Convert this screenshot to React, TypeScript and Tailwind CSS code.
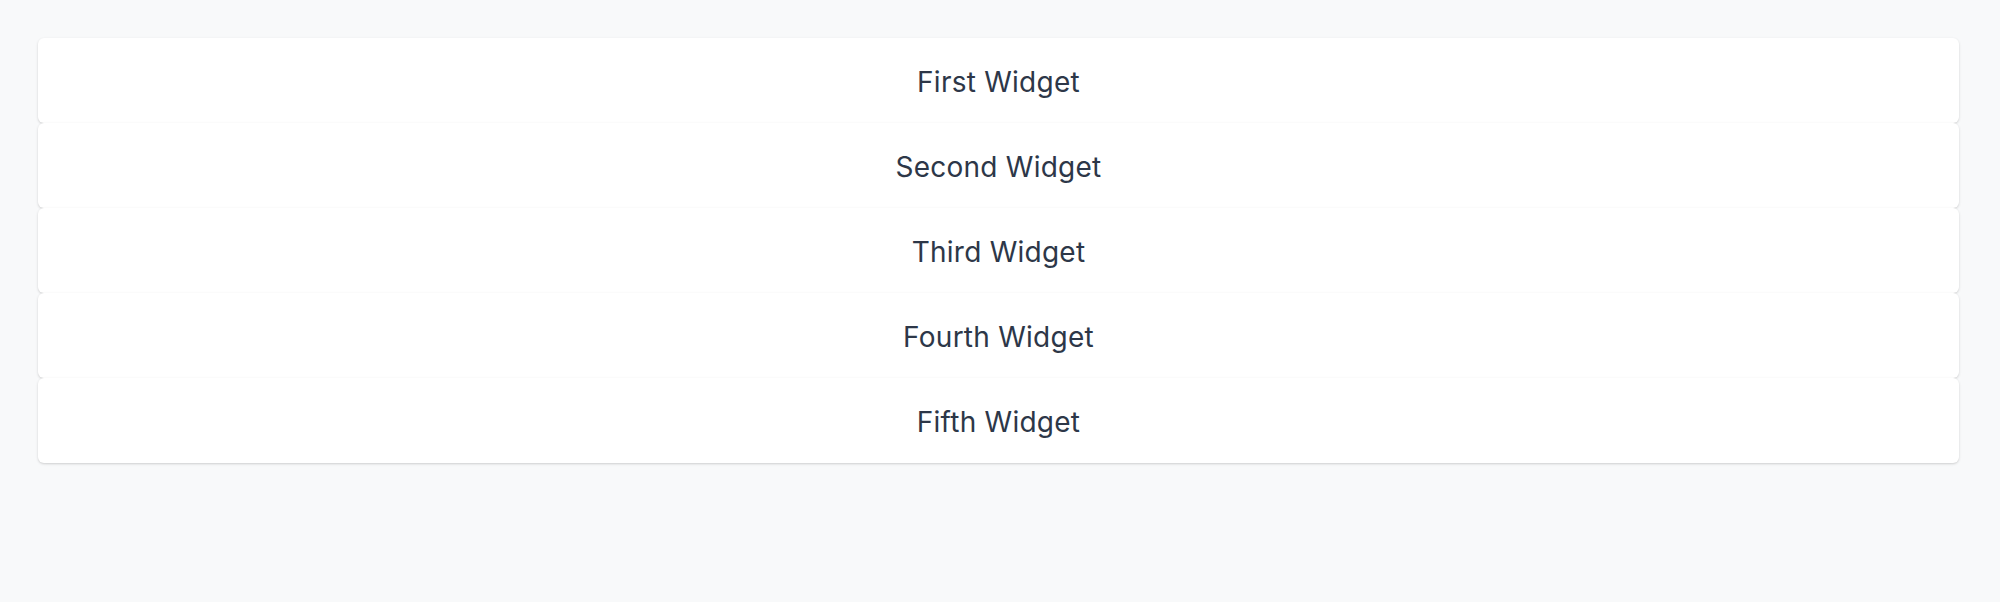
import React from "react";

const items = ["First Widget", "Second Widget", "Third Widget", "Fourth Widget", "Fifth Widget"];

export default function App() {
  return (
    <div className="min-h-[602px] w-full bg-[#f8f9fa] pt-[38px] pl-[38px] pr-[41px]" style={{ fontFamily: "Inter, 'Noto Sans', sans-serif" }}>
      <div className="flex flex-col">
        {items.map((t) => (
          <div
            key={t}
            className="flex h-[85px] items-center justify-center rounded-md bg-white pt-[2px] text-[28px] tracking-[0.25px] text-[#2d3748] shadow-[0_1px_3px_rgba(0,0,0,0.12),0_1px_2px_rgba(0,0,0,0.06)]"
          >
            {t}
          </div>
        ))}
      </div>
    </div>
  );
}
